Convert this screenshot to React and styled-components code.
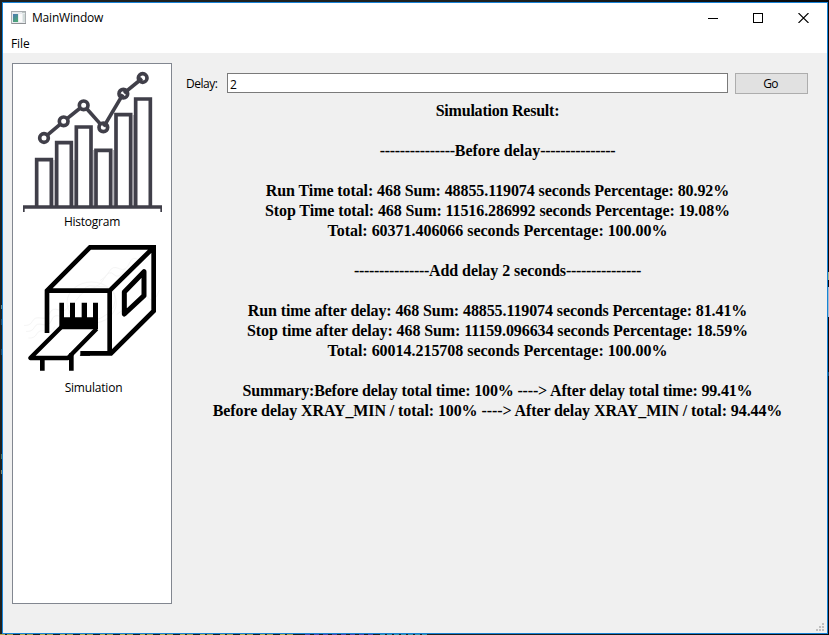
import React from "react";
import styled, { createGlobalStyle } from "styled-components";

const GlobalStyle = createGlobalStyle`
  * { box-sizing: border-box; }
  body { margin: 0; background: #1c1e1d; overflow: hidden; }
`;

const Desktop = styled.div`
  width: 829px;
  height: 635px;
  padding: 2px 1px 1px 2px;
  background:
    linear-gradient(#a9b88c, #a9b88c) 828px 272px / 1px 8px no-repeat,
    linear-gradient(#a5c0cf, #a5c0cf) 828px 287px / 1px 30px no-repeat,
    linear-gradient(#174a66, #174a66) 828px 372px / 1px 4px no-repeat,
    linear-gradient(#6f8a85, #6f8a85) 1px 305px / 1px 4px no-repeat,
    linear-gradient(#274b66, #274b66) 1px 319px / 1px 6px no-repeat,
    linear-gradient(#274b66, #274b66) 1px 349px / 1px 6px no-repeat,
    linear-gradient(#56745a, #56745a) 1px 454px / 1px 5px no-repeat,
    linear-gradient(#84886a, #84886a) 1px 470px / 1px 4px no-repeat,
    repeating-linear-gradient(90deg, #b5ab4e 0 5px, #1c1e1d 5px 7px, #a49a48 7px 13px, #1c1e1d 13px 20px) 0 634px / 300px 1px no-repeat,
    repeating-linear-gradient(90deg, #5247a8 0 5px, #1c1e1d 5px 9px) 305px 634px / 70px 1px no-repeat,
    repeating-linear-gradient(90deg, #3b93a8 0 5px, #1c1e1d 5px 7px) 380px 634px / 48px 1px no-repeat,
    linear-gradient(90deg, #1f2120 0 60%, #08090c);
`;

const Window = styled.div`
  display: flex;
  flex-direction: column;
  height: 632px;
  border: 1px solid #1883d7;
  background: #f0f0f0;
  color: #000;
  font: 12px/16px "Open Sans", "Noto Sans", sans-serif;
  position: relative;
`;

const TitleBar = styled.header`
  display: flex;
  align-items: center;
  height: 30px;
  padding: 0 18px 0 8px;
  background: #fff;
`;

const Title = styled.span`
  flex: 1;
  margin-left: 6px;
  letter-spacing: -0.2px;
`;

const Controls = styled.div`
  display: flex;
  gap: 35px;
  margin-top: -1px;
  svg { display: block; }
`;

const MenuBar = styled.nav`
  height: 20px;
  padding: 3px 8px 1px;
  background: #fff;
  letter-spacing: -0.1px;
`;

const Content = styled.main`
  flex: 1;
  display: flex;
  gap: 14px;
  padding: 10px 18px 0 9px;
`;

const Sidebar = styled.aside`
  width: 160px;
  height: 541px;
  border: 1px solid #828790;
  background: #fff;
  display: flex;
  flex-direction: column;
`;

const ListItem = styled.div`
  height: 166px;
  display: flex;
  flex-direction: column;
  align-items: center;
  svg { display: block; }
`;

const ItemLabel = styled.span`
  margin-top: ${(p) => p.$top}px;
  letter-spacing: ${(p) => p.$tracking}px;
  padding-left: ${(p) => p.$shift || 0}px;
`;

const Panel = styled.section`
  flex: 1;
  display: flex;
  flex-direction: column;
  padding-top: 10px;
`;

const DelayRow = styled.div`
  display: flex;
  align-items: flex-start;
  height: 28px;
`;

const DelayLabel = styled.label`
  width: 41px;
  padding-top: 3px;
  letter-spacing: -0.5px;
`;

const DelayInput = styled.input`
  width: 501px;
  height: 20px;
  margin: 0 7px 0 0;
  padding: 2px 2px 0;
  border: 1px solid #7a7a7a;
  background: #fff;
  font: inherit;
  outline: none;
`;

const GoButton = styled.button`
  width: 73px;
  height: 21px;
  padding: 1px 2px 0 0;
  border: 1px solid #adadad;
  background: #e1e1e1;
  font: 12px/16px "Open Sans", "Noto Sans", sans-serif;
  letter-spacing: -0.8px;
  color: #000;
`;

const Results = styled.div`
  display: flex;
  flex-direction: column;
  align-items: center;
  font: bold 16px/20px "Liberation Serif", serif;
  white-space: pre;
`;

const ResultLine = styled.div`
  height: 20px;
  letter-spacing: ${(p) => p.$tracking || 0}px;
`;

const Rule = styled.span`
  letter-spacing: -0.33px;
`;

const Grip = styled.svg`
  position: absolute;
  right: 3px;
  bottom: 2px;
`;

const AppIcon = () => (
  <svg width="15" height="14" viewBox="0 0 15 14" shapeRendering="crispEdges">
    <defs>
      <linearGradient id="pane" x1="0" y1="0" x2="0.5" y2="1">
        <stop offset="0" stopColor="#4a78b4" />
        <stop offset="1" stopColor="#4ba577" />
      </linearGradient>
    </defs>
    <rect x="0.5" y="0.5" width="14" height="12" fill="#e8ebee" stroke="#a9adb1" />
    <rect x="1" y="12" width="14" height="1" fill="#8d9194" />
    <rect x="2" y="3" width="5" height="8" fill="url(#pane)" />
    <rect x="8" y="3" width="3" height="8" fill="#fafafa" />
    <rect x="12" y="3" width="2" height="8" fill="#d2dcda" />
    <rect x="11" y="1" width="3" height="1" fill="#bcc6c2" />
  </svg>
);

const bars = [[75, 294], [135, 243], [194, 196], [253, 266], [313, 159], [372, 112]];
const points = [[102, 234], [161, 184], [221, 136], [280, 202], [340, 101], [398, 54]];

const HistogramIcon = () => (
  <svg width="156" height="150" viewBox="12 12 468 450" fill="none" stroke="#403f49">
    {bars.slice(0, 5).map(([x]) => (
      <path key={x} d={`M${x + 57} 436V${x === 313 ? 165 : x === 253 || x === 194 ? 270 : 300}`} stroke="#b7b6bb" strokeWidth="4" />
    ))}
    {bars.map(([x, y]) => (
      <path key={x} d={`M${x + 5} 441V${y + 5}H${x + 49}V441`} strokeWidth="11" />
    ))}
    <path d="M39 441H456" strokeWidth="10" />
    <path d="M41.5 440V456M453.5 440V456" strokeWidth="5" />
    {points.slice(1).map(([x, y], i) => {
      const [px, py] = points[i];
      const d = Math.hypot(x - px, y - py);
      const ux = ((x - px) / d) * 13;
      const uy = ((y - py) / d) * 13;
      const start = i === 3 || i === 4 ? 0.2 : 1;
      const end = i >= 3 ? 0.2 : 1;
      return (
        <path key={x} d={`M${px + ux * start} ${py + uy * start}L${x - ux * end} ${y - uy * end}`} strokeWidth="11" />
      );
    })}
    {points.map(([x, y]) => (
      <circle key={x} cx={x} cy={y} r="13" strokeWidth="11" />
    ))}
  </svg>
);

const SimulationIcon = () => (
  <svg width="156" height="144" viewBox="12 -14 468 432" fill="none" stroke="#000" strokeWidth="14">
    <g stroke="#f5f5f5" strokeWidth="3">
      <path d="M42 272q18 2 25-12t26-10 26-14 28-10 30-14M48 290q18 2 25-12t26-8 26-14 28-10M55 310q18 2 25-12t28-8 26-14M210 176q20-28 38-22t34-22 30-12 35-20M270 138q18-10 28-28t30-8 30-16 30-8M320 240q20-18 36-16t32-24 30-8 30-26" />
      <ellipse cx="245" cy="204" rx="74" ry="62" />
      <path d="M176 238q30-76 86-82t54 40-76 66" />
    </g>
    <path d="M111 295V168L240 38H431V229L303 356H211M111 168H299V356M299 168L431 38" />
    <path d="M111 168L240 38" strokeWidth="11" />
    <path d="M209 363L222 350H240V363Z" fill="#000" stroke="none" />
    <path d="M343 172L402 111V183L343 238Z" strokeLinejoin="round" strokeWidth="15" />
    <path d="M148 204H162V248H180V204H195V248H215V204H231V248H249V204H264V284H148Z" fill="#000" stroke="none" />
    <path d="M155 276L61 370H174L260 282" strokeWidth="13" strokeLinejoin="round" />
    <path d="M97 370V408M184 356V408" strokeWidth="14" />
  </svg>
);

const DASHES = "-".repeat(15);

const lines = [
  { text: "Simulation Result:", tracking: -0.22 },
  { text: "" },
  { text: "Before delay", tracking: 0, ruled: true },
  { text: "" },
  { text: "Run Time total: 468 Sum: 48855.119074 seconds Percentage: 80.92%", tracking: -0.094 },
  { text: "Stop Time total: 468 Sum: 11516.286992 seconds Percentage: 19.08%", tracking: -0.094 },
  { text: "Total: 60371.406066 seconds Percentage: 100.00%", tracking: -0.03 },
  { text: "" },
  { text: "Add delay 2 seconds", tracking: -0.07, ruled: true },
  { text: "" },
  { text: "Run time after delay: 468 Sum: 48855.119074 seconds Percentage: 81.41%", tracking: -0.1 },
  { text: "Stop time after delay: 468 Sum: 11159.096634 seconds Percentage: 18.59%", tracking: -0.09 },
  { text: "Total: 60014.215708 seconds Percentage: 100.00%", tracking: -0.03 },
  { text: "" },
  { text: "Summary:Before delay total time: 100% ----> After delay total time: 99.41%", tracking: -0.16 },
  { text: "Before delay XRAY_MIN / total: 100% ----> After delay XRAY_MIN / total: 94.44%", tracking: -0.09 },
];

export default function App() {
  return (
    <Desktop>
      <GlobalStyle />
      <Window>
        <TitleBar>
          <AppIcon />
          <Title>MainWindow</Title>
          <Controls>
            <svg width="10" height="10" shapeRendering="crispEdges"><path d="M0 5.5H10" stroke="#000" /></svg>
            <svg width="10" height="10" shapeRendering="crispEdges"><rect x=".5" y=".5" width="9" height="9" fill="none" stroke="#000" /></svg>
            <svg width="11" height="10"><path d="M.5 0L10.5 10M10.5 0L.5 10" stroke="#000" strokeWidth="1.1" /></svg>
          </Controls>
        </TitleBar>
        <MenuBar>File</MenuBar>
        <Content>
          <Sidebar>
            <ListItem>
              <HistogramIcon />
              <ItemLabel $top={0} $tracking={-0.25}>Histogram</ItemLabel>
            </ListItem>
            <ListItem>
              <SimulationIcon />
              <ItemLabel $top={6} $tracking={-0.2} $shift={3}>Simulation</ItemLabel>
            </ListItem>
          </Sidebar>
          <Panel>
            <DelayRow>
              <DelayLabel htmlFor="delay">Delay:</DelayLabel>
              <DelayInput id="delay" defaultValue="2" />
              <GoButton>Go</GoButton>
            </DelayRow>
            <Results>
              {lines.map(({ text, tracking, ruled }, i) => (
                <ResultLine key={i} $tracking={tracking}>
                  {ruled && <Rule>{DASHES}</Rule>}
                  {text}
                  {ruled && <Rule>{DASHES}</Rule>}
                </ResultLine>
              ))}
            </Results>
          </Panel>
        </Content>
        <Grip width="8" height="8" fill="#bfbfbf">
          <path d="M6 0h2v2h-2zM3 3h2v2h-2zM6 3h2v2h-2zM0 6h2v2h-2zM3 6h2v2h-2zM6 6h2v2h-2z" />
        </Grip>
      </Window>
    </Desktop>
  );
}
